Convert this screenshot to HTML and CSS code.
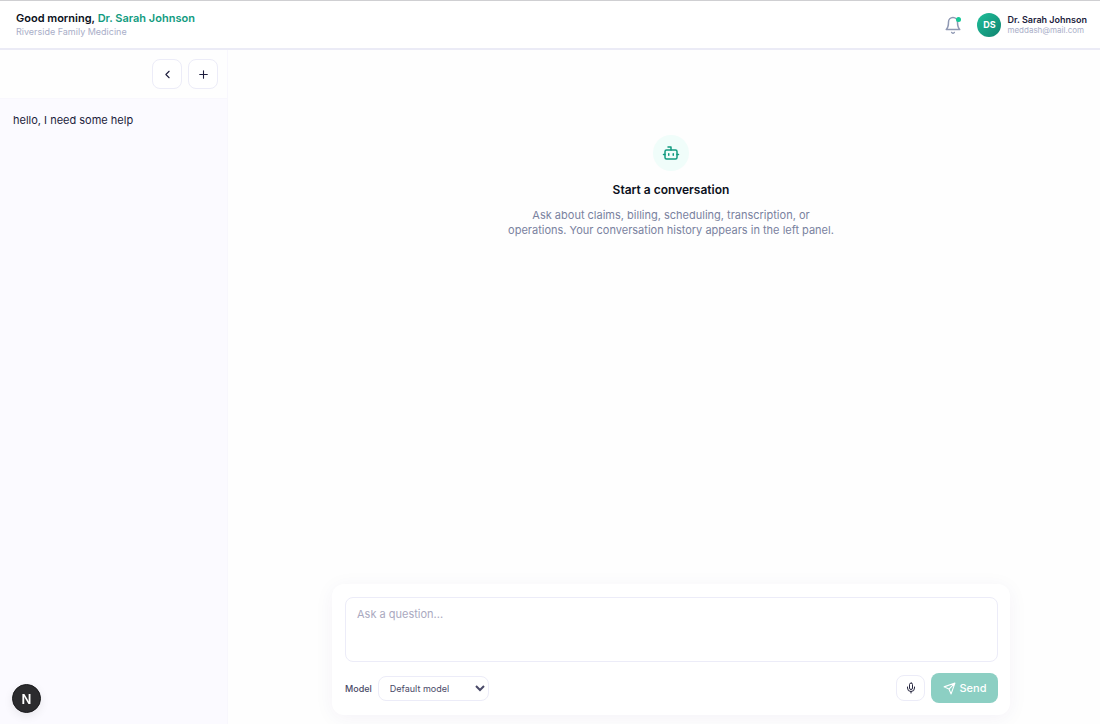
FILE: index.html
```html
<!DOCTYPE html>
<html lang="en">
<head>
<meta charset="UTF-8">
<meta name="viewport" content="width=device-width, initial-scale=1.0">
<title>Assistant</title>
<link rel="stylesheet" href="styles.css">
</head>
<body>

<header class="topbar">
  <div class="greeting">
    <h1>Good morning, <span>Dr. Sarah Johnson</span></h1>
    <p>Riverside Family Medicine</p>
  </div>
  <div class="account">
    <button type="button" class="bell" aria-label="Notifications">
      <svg width="18" height="18" viewBox="0 0 24 24">
        <path d="M6 8a6 6 0 0 1 12 0c0 7 3 10 3 10H3s3-3 3-10"/>
        <path d="M10.3 22a1.94 1.94 0 0 0 3.4 0"/>
      </svg>
      <span class="dot"></span>
    </button>
    <div class="avatar">DS</div>
    <div class="user">
      <strong>Dr. Sarah Johnson</strong>
      <span>meddash@mail.com</span>
    </div>
  </div>
</header>

<div class="layout">
  <aside class="sidebar">
    <div class="sidebar-head">
      <button type="button" class="square" aria-label="Collapse panel">
        <svg width="13" height="13" viewBox="0 0 24 24"><path d="m15 18-6-6 6-6"/></svg>
      </button>
      <button type="button" class="square" aria-label="New conversation">
        <svg width="13" height="13" viewBox="0 0 24 24"><path d="M5 12h14M12 5v14"/></svg>
      </button>
    </div>
    <nav class="history">
      <a href="#">hello, I need some help</a>
    </nav>
  </aside>

  <main class="chat">
    <section class="empty">
      <div class="bot">
        <svg width="18" height="18" viewBox="0 0 24 24">
          <path d="M12 8V4H8"/>
          <rect x="4" y="8" width="16" height="12" rx="2"/>
          <path d="M2 14h2M20 14h2M15 13v2M9 13v2"/>
        </svg>
      </div>
      <h2>Start a conversation</h2>
      <p>Ask about claims, billing, scheduling, transcription, or operations. Your conversation history appears in the left panel.</p>
    </section>

    <form class="composer">
      <textarea aria-label="Question" placeholder="Ask a question..."></textarea>
      <div class="controls">
        <label for="model">Model</label>
        <select id="model" name="model">
          <option>Default model</option>
        </select>
        <button type="button" class="mic" aria-label="Record voice">
          <svg width="12" height="12" viewBox="0 0 24 24">
            <rect x="9" y="2" width="6" height="13" rx="3"/>
            <path d="M19 10v2a7 7 0 0 1-14 0v-2M12 19v3"/>
          </svg>
        </button>
        <button type="submit" class="send" disabled>
          <svg width="13" height="13" viewBox="0 0 24 24">
            <path d="M22 2 11 13M22 2l-7 20-4-9-9-4Z"/>
          </svg>
          Send
        </button>
      </div>
    </form>
  </main>
</div>

<button type="button" class="dev-badge" aria-label="Open dev tools">N</button>

</body>
</html>
```
FILE: styles.css
```css
* {
  box-sizing: border-box;
}
body {
  display: flex;
  flex-direction: column;
  min-height: 100vh;
  margin: 0;
  background-color: #fefefe;
  color: #0f172a;
  font-family: Inter, "Liberation Sans", sans-serif;
}
h1,
h2,
p {
  margin: 0;
}
button,
select,
textarea {
  font-family: inherit;
}
button {
  display: flex;
  align-items: center;
  justify-content: center;
  padding: 0;
  cursor: pointer;
}
svg {
  fill: none;
  stroke: currentColor;
  stroke-width: 2;
  stroke-linecap: round;
  stroke-linejoin: round;
}

/* top bar */
.topbar {
  display: flex;
  align-items: center;
  justify-content: space-between;
  height: 50px;
  padding: 0 13px 0 16px;
  background-color: #fff;
  border-top: 1px solid #cfcfd2;
  border-bottom: 2px solid #ebebf6;
}
.greeting h1 {
  color: #0b1020;
  font-size: 11px;
  font-weight: 600;
  line-height: 14px;
}
.greeting h1 span {
  color: #129b80;
}
.greeting p {
  color: #a9aec8;
  font-size: 9px;
  line-height: 13px;
}
.account {
  display: flex;
  align-items: center;
}
.bell {
  position: relative;
  width: 18px;
  height: 18px;
  margin-right: 15px;
  background: none;
  border: none;
  color: #8f98b3;
}
.dot {
  position: absolute;
  top: 1px;
  right: 1px;
  width: 5px;
  height: 5px;
  border-radius: 50%;
  background-color: #14c997;
}
.avatar {
  width: 24px;
  height: 24px;
  margin-right: 6px;
  border-radius: 50%;
  background: linear-gradient(135deg, #1fbf9a, #10836f);
  color: #fff;
  font-size: 9px;
  font-weight: 700;
  line-height: 24px;
  text-align: center;
}
.user {
  display: flex;
  flex-direction: column;
}
.user strong {
  color: #1c1c3c;
  font-size: 9px;
  font-weight: 600;
  line-height: 11px;
}
.user span {
  color: #a9aec8;
  font-size: 8px;
  line-height: 10px;
}

/* conversation list */
.layout {
  display: flex;
  flex: 1;
}
.sidebar {
  display: flex;
  flex-direction: column;
  width: 228px;
  border-right: 1px solid #f8f7fd;
}
.sidebar-head {
  display: flex;
  justify-content: flex-end;
  gap: 6px;
  padding: 9px;
  border-bottom: 1px solid #f8f7fd;
}
.square {
  width: 30px;
  height: 30px;
  background-color: #fff;
  border: 1px solid #ececf8;
  border-radius: 8px;
  color: #1c1c3c;
}
.history {
  flex: 1;
  padding: 13px;
  background-color: #fbfaff;
}
.history a {
  display: block;
  color: #1c1c3c;
  font-size: 11px;
  line-height: 16px;
  text-decoration: none;
}

/* chat */
.chat {
  display: flex;
  flex: 1;
  flex-direction: column;
  align-items: center;
  justify-content: space-between;
  padding: 85px 0 9px 14px;
}
.empty {
  display: flex;
  flex-direction: column;
  align-items: center;
  width: 100%;
  max-width: 332px;
  text-align: center;
}
.bot {
  display: flex;
  align-items: center;
  justify-content: center;
  width: 36px;
  height: 36px;
  margin-bottom: 11px;
  border-radius: 50%;
  background-color: #f0fdfa;
  color: #129b80;
}
.empty h2 {
  margin-bottom: 10px;
  color: #0b1020;
  font-size: 12px;
  font-weight: 600;
  line-height: 16px;
}
.empty p {
  color: #7a829e;
  font-size: 11px;
  line-height: 15px;
}
.composer {
  width: 100%;
  max-width: 678px;
  padding: 13px 12px 12px 13px;
  background-color: #fff;
  border-radius: 12px;
  box-shadow: 0 3px 20px rgba(60, 20, 120, 0.05);
}
.composer textarea {
  display: block;
  width: 100%;
  height: 65px;
  margin-bottom: 11px;
  padding: 9px 11px;
  background-color: #fff;
  border: 1px solid #ececf8;
  border-radius: 8px;
  font-size: 11px;
  line-height: 15px;
  resize: none;
}
.composer textarea::placeholder {
  color: #aaa9c0;
}
.controls {
  display: flex;
  align-items: center;
  gap: 6px;
}
.controls label {
  color: #4a4a68;
  font-size: 9px;
  font-weight: 500;
}
.controls select {
  width: 111px;
  height: 25px;
  padding: 0 0 0 7px;
  background-color: #fff;
  border: 1px solid #ececf8;
  border-radius: 8px;
  color: #4a4a68;
  font-size: 9px;
}
.mic {
  width: 29px;
  height: 26px;
  margin-left: auto;
  background-color: #fff;
  border: 1px solid #ececf8;
  border-radius: 8px;
  color: #26263f;
}
.send {
  gap: 4px;
  width: 67px;
  height: 30px;
  background-color: #8ccfc3;
  border: none;
  border-radius: 8px;
  color: #fff;
  font-size: 11px;
  font-weight: 500;
}

.dev-badge {
  position: fixed;
  bottom: 11px;
  left: 12px;
  width: 29px;
  height: 29px;
  background-color: #2b2b2e;
  border: 1px solid #18181b;
  border-radius: 50%;
  box-shadow: 0 3px 10px rgba(0, 0, 0, 0.08);
  color: #fff;
  font-size: 13px;
  font-weight: 600;
}
```
